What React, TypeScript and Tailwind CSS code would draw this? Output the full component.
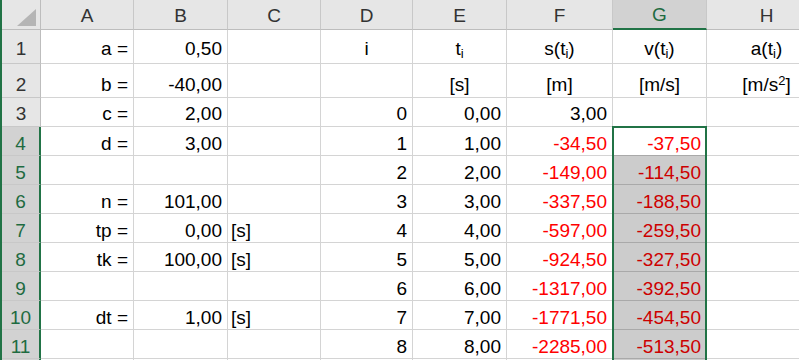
import React from "react";

type Align = "l" | "r" | "c";
type Cell = { v?: React.ReactNode; al?: Align; red?: boolean } | null;

const colWidths = ["w-[93px]", "w-[94px]", "w-[93px]", "w-[92px]", "w-[94px]", "w-[106px]", "w-[94px]", "w-[120px]"];
const letters = ["A", "B", "C", "D", "E", "F", "G", "H"];

const r = (v: React.ReactNode, red = false): Cell => ({ v, al: "r", red });
const c = (v: React.ReactNode): Cell => ({ v, al: "c" });
const l = (v: React.ReactNode): Cell => ({ v, al: "l" });

const ti = (
  <>
    t<sub className="text-[13px]">i</sub>
  </>
);

// rows 1..12, columns A..H
const rows: { h: string; pb: string; cells: Cell[] }[] = [
  { h: "h-[34px]", pb: "pb-[3px]", cells: [r("a ="), r("0,50"), null, c("i"), c(ti), c(<>s({ti})</>), c(<>v({ti})</>), c(<>a({ti})</>)] },
  { h: "h-[34px]", pb: "pb-[1px]", cells: [r("b ="), r("-40,00"), null, null, c("[s]"), c("[m]"), c("[m/s]"), c(<>[m/s<sup className="text-[13px]">2</sup>]</>)] },
  { h: "h-[29px]", pb: "pb-[1px]", cells: [r("c ="), r("2,00"), null, r("0"), r("0,00"), r("3,00"), null, null] },
  { h: "h-[29px]", pb: "pb-0", cells: [r("d ="), r("3,00"), null, r("1"), r("1,00"), r("-34,50", true), r("-37,50", true), null] },
  { h: "h-[29px]", pb: "pb-0", cells: [null, null, null, r("2"), r("2,00"), r("-149,00", true), r("-114,50", true), null] },
  { h: "h-[29px]", pb: "pb-0", cells: [r("n ="), r("101,00"), null, r("3"), r("3,00"), r("-337,50", true), r("-188,50", true), null] },
  { h: "h-[29px]", pb: "pb-0", cells: [r("tp ="), r("0,00"), l("[s]"), r("4"), r("4,00"), r("-597,00", true), r("-259,50", true), null] },
  { h: "h-[29px]", pb: "pb-0", cells: [r("tk ="), r("100,00"), l("[s]"), r("5"), r("5,00"), r("-924,50", true), r("-327,50", true), null] },
  { h: "h-[29px]", pb: "pb-0", cells: [null, null, null, r("6"), r("6,00"), r("-1317,00", true), r("-392,50", true), null] },
  { h: "h-[29px]", pb: "pb-0", cells: [r("dt ="), r("1,00"), l("[s]"), r("7"), r("7,00"), r("-1771,50", true), r("-454,50", true), null] },
  { h: "h-[29px]", pb: "pb-0", cells: [null, null, null, r("8"), r("8,00"), r("-2285,00", true), r("-513,50", true), null] },
  { h: "h-[29px]", pb: "pb-0", cells: [null, null, null, null, null, null, null, null] },
];

export default function App() {
  return (
    <div
      className="w-[799px] h-[360px] overflow-hidden bg-white border-l-2 border-[#217346] relative text-[19px] leading-[22px] text-black"
      style={{ fontFamily: '"Liberation Sans", Arial, sans-serif' }}
    >
      {/* Column headers */}
      <div className="flex h-[30px]">
        <div className="w-[39px] shrink-0 bg-[#e6e6e6] border-r border-b border-[#bdbdbd] flex items-end justify-end pr-[3px] pb-[3px]">
          <svg width="20" height="17" viewBox="0 0 20 17">
            <polygon points="19,0 19,17 0,17" fill="#b5b5b5" />
          </svg>
        </div>
        {letters.map((L, i) => {
          const sel = L === "G";
          return (
            <div
              key={L}
              className={`${colWidths[i]} shrink-0 flex items-center justify-center border-r border-[#c8c8c8] ${
                sel ? "bg-[#d2d2d2] border-b-2 border-b-[#217346] text-[#1e6b41]" : "bg-[#e6e6e6] border-b border-b-[#bdbdbd] text-[#333]"
              }`}
            >
              <span className="mt-[2px]">{L}</span>
            </div>
          );
        })}
      </div>

      {/* Rows */}
      {rows.map((row, ri) => {
        const n = ri + 1;
        const sel = n >= 4;
        return (
          <div key={n} className={`flex ${row.h}`}>
            <div
              className={`w-[39px] shrink-0 flex items-end justify-center border-b border-[#c8c8c8] ${row.pb} ${
                sel ? "bg-[#d2d2d2] border-r-2 border-r-[#217346] text-[#1e6b41]" : "bg-[#e6e6e6] border-r border-r-[#bdbdbd] text-[#333]"
              }`}
            >
              {n <= 11 ? n : ""}
            </div>
            {row.cells.map((cell, ci) => (
              <div
                key={ci}
                className={`${colWidths[ci]} shrink-0 flex items-end border-r border-b border-[#d4d4d4] whitespace-nowrap ${row.pb} ${
                  cell?.al === "r" ? "justify-end pr-[5px]" : cell?.al === "l" ? "justify-start pl-[3px]" : "justify-center"
                } ${cell?.red ? "text-[#ff0000]" : ""}`}
              >
                <span>{cell?.v}</span>
              </div>
            ))}
          </div>
        );
      })}

      {/* Selection G4:G11 */}
      <div className="absolute left-[610px] top-[126px] w-[95px] h-[260px] border-2 border-[#217346] flex flex-col pointer-events-none">
        <div className="h-[27px] shrink-0" />
        <div className="flex-1 bg-black/20" />
      </div>
    </div>
  );
}
